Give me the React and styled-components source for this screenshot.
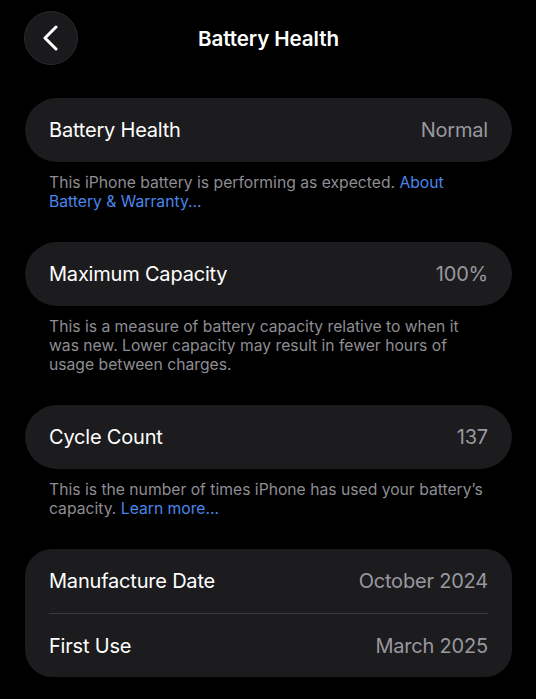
import React from 'react'
import styled, { createGlobalStyle } from 'styled-components'

const Global = createGlobalStyle`
  html, body {
    margin: 0;
    padding: 0;
    background: #000;
  }
  body {
    font-family: Inter, "Noto Sans", sans-serif;
    color: #fff;
    -webkit-font-smoothing: antialiased;
  }
`

const Page = styled.div`
  width: 536px;
  min-height: 699px;
  background: #000;
  box-sizing: border-box;
  padding: 11px 24px 0 25px;
`

const Header = styled.header`
  position: relative;
  height: 54px;
  display: flex;
  align-items: center;
  justify-content: center;
  margin-bottom: 33px;
`

const BackButton = styled.button`
  position: absolute;
  left: -1px;
  top: 0;
  width: 54px;
  height: 54px;
  border-radius: 50%;
  background: #1a1a1c;
  border: 1px solid #2a2a2d;
  display: flex;
  align-items: center;
  justify-content: center;
  padding: 0;
  cursor: pointer;
`

const Title = styled.h1`
  margin: 0;
  font-size: 20.6px;
  font-weight: 600;
  letter-spacing: -0.1px;
  color: #fff;
`

const Section = styled.section`
  margin-bottom: 31px;
`

const Card = styled.div`
  background: #1c1c1e;
  border-radius: ${p => (p.$pill ? '32px' : '27px')};
  padding: 0 24px;
`

const Row = styled.div`
  height: ${p => (p.$divided ? '63px' : '64px')};
  display: flex;
  align-items: center;
  justify-content: space-between;
  border-top: ${p => (p.$divided ? '1px solid #3a3a3c' : 'none')};
`

const Label = styled.span`
  font-size: 20px;
  color: #fff;
  letter-spacing: -0.2px;
`

const Value = styled.span`
  font-size: 20px;
  color: #98989e;
  letter-spacing: -0.2px;
`

const Footer = styled.p`
  margin: 11px 0 0;
  padding: 0 26px 0 24px;
  font-size: 15.7px;
  line-height: 19px;
  color: #8d8d93;
`

const Link = styled.a`
  color: #4a86ec;
  text-decoration: none;
`

const Chevron = () => (
  <svg width="20" height="26" viewBox="0 0 20 26" fill="none">
    <path d="M15 2 L4 13 L15 24" stroke="#fff" strokeWidth="3" strokeLinecap="round" strokeLinejoin="round" />
  </svg>
)

const App = () => {
  return (
    <>
      <Global />
      <Page>
        <Header>
          <BackButton aria-label='Back'><Chevron /></BackButton>
          <Title>Battery Health</Title>
        </Header>

        <Section>
          <Card $pill>
            <Row><Label>Battery Health</Label><Value>Normal</Value></Row>
          </Card>
          <Footer>
            This iPhone battery is performing as expected. <Link href='#'>About Battery &amp; Warranty...</Link>
          </Footer>
        </Section>

        <Section>
          <Card $pill>
            <Row><Label>Maximum Capacity</Label><Value>100%</Value></Row>
          </Card>
          <Footer>
            This is a measure of battery capacity relative to when it was new. Lower capacity may result in fewer hours of usage between charges.
          </Footer>
        </Section>

        <Section>
          <Card $pill>
            <Row><Label>Cycle Count</Label><Value>137</Value></Row>
          </Card>
          <Footer>
            This is the number of times iPhone has used your battery’s capacity. <Link href='#'>Learn more...</Link>
          </Footer>
        </Section>

        <Section>
          <Card>
            <Row><Label>Manufacture Date</Label><Value>October 2024</Value></Row>
            <Row $divided><Label>First Use</Label><Value>March 2025</Value></Row>
          </Card>
        </Section>
      </Page>
    </>
  )
}

export default App
